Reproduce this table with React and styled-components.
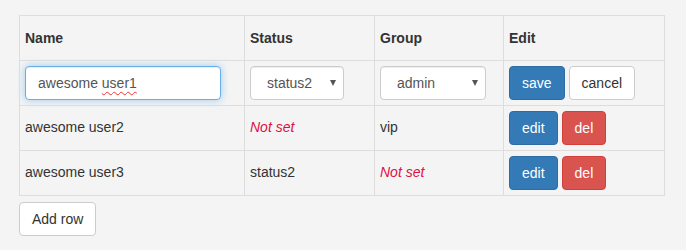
import React from "react";
import styled, { createGlobalStyle, css } from "styled-components";

const GlobalStyle = createGlobalStyle`
  html, body {
    margin: 0;
    background: #f4f4f4;
  }
  body {
    font-family: "Liberation Sans", Arial, sans-serif;
    font-size: 14px;
    line-height: 1.42857;
    color: #333;
  }
`;

const Page = styled.div`
  padding: 15px 19px;
`;

const Table = styled.table`
  width: 645px;
  table-layout: fixed;
  border-collapse: collapse;
  border-spacing: 0;
`;

const Th = styled.th`
  border: 1px solid #ddd;
  padding: 5px;
  line-height: 34px;
  text-align: left;
  font-weight: bold;
`;

const Td = styled.td`
  border: 1px solid #ddd;
  padding: 5px;
  height: 34px;
  vertical-align: middle;
  white-space: nowrap;
`;

const Empty = styled.span`
  color: #dd1144;
  font-style: italic;
`;

const TextBox = styled.div`
  box-sizing: border-box;
  width: 196px;
  height: 34px;
  padding: 6px 12px;
  background: #fff;
  border: 1px solid #66afe9;
  border-radius: 4px;
  box-shadow: inset 0 1px 1px rgba(0, 0, 0, 0.075),
    0 0 8px rgba(102, 175, 233, 0.6);
  color: #555;
  line-height: 20px;
`;

const Misspelled = styled.span`
  text-decoration: underline wavy #e33;
  text-decoration-thickness: 1px;
  text-underline-offset: 3px;
`;

const Select = styled.div`
  box-sizing: border-box;
  position: relative;
  width: ${(p) => p.$width}px;
  height: 34px;
  padding: 6px 20px 6px 16px;
  background: #fff;
  border: 1px solid #ccc;
  border-radius: 4px;
  box-shadow: inset 0 1px 1px rgba(0, 0, 0, 0.075);
  color: #555;
  line-height: 20px;
`;

const Caret = styled.span`
  position: absolute;
  right: 7px;
  top: 13px;
  width: 0;
  height: 0;
  border-left: 3px solid transparent;
  border-right: 3px solid transparent;
  border-top: 6px solid #555;
`;

const Actions = styled.div`
  display: flex;
  gap: 4px;
`;

const variants = {
  primary: css`
    color: #fff;
    background: #337ab7;
    border-color: #2e6da4;
  `,
  danger: css`
    color: #fff;
    background: #d9534f;
    border-color: #d43f3a;
  `,
  default: css`
    color: #333;
    background: #fff;
    border-color: #ccc;
  `,
};

const Button = styled.button`
  box-sizing: border-box;
  height: 34px;
  padding: 6px 12px;
  font-family: inherit;
  font-size: 14px;
  line-height: 20px;
  border: 1px solid;
  border-radius: 4px;
  cursor: pointer;
  ${(p) => variants[p.$kind || "default"]}
`;

const AddButton = styled(Button)`
  margin-top: 6px;
`;

const rows = [
  { name: "awesome user2", status: null, group: "vip" },
  { name: "awesome user3", status: "status2", group: null },
];

const Value = ({ children }) => (children ? children : <Empty>Not set</Empty>);

export default function App() {
  return (
    <Page>
      <GlobalStyle />
      <Table>
        <colgroup>
          <col style={{ width: 225 }} />
          <col style={{ width: 130 }} />
          <col style={{ width: 129 }} />
          <col style={{ width: 161 }} />
        </colgroup>
        <thead>
          <tr>
            <Th>Name</Th>
            <Th>Status</Th>
            <Th>Group</Th>
            <Th>Edit</Th>
          </tr>
        </thead>
        <tbody>
          <tr>
            <Td>
              <TextBox>
                awesome <Misspelled>user1</Misspelled>
              </TextBox>
            </Td>
            <Td>
              <Select $width={94}>
                status2
                <Caret />
              </Select>
            </Td>
            <Td>
              <Select $width={106}>
                admin
                <Caret />
              </Select>
            </Td>
            <Td>
              <Actions>
                <Button $kind="primary">save</Button>
                <Button>cancel</Button>
              </Actions>
            </Td>
          </tr>
          {rows.map((r) => (
            <tr key={r.name}>
              <Td>{r.name}</Td>
              <Td>
                <Value>{r.status}</Value>
              </Td>
              <Td>
                <Value>{r.group}</Value>
              </Td>
              <Td>
                <Actions>
                  <Button $kind="primary">edit</Button>
                  <Button $kind="danger">del</Button>
                </Actions>
              </Td>
            </tr>
          ))}
        </tbody>
      </Table>
      <AddButton>Add row</AddButton>
    </Page>
  );
}
